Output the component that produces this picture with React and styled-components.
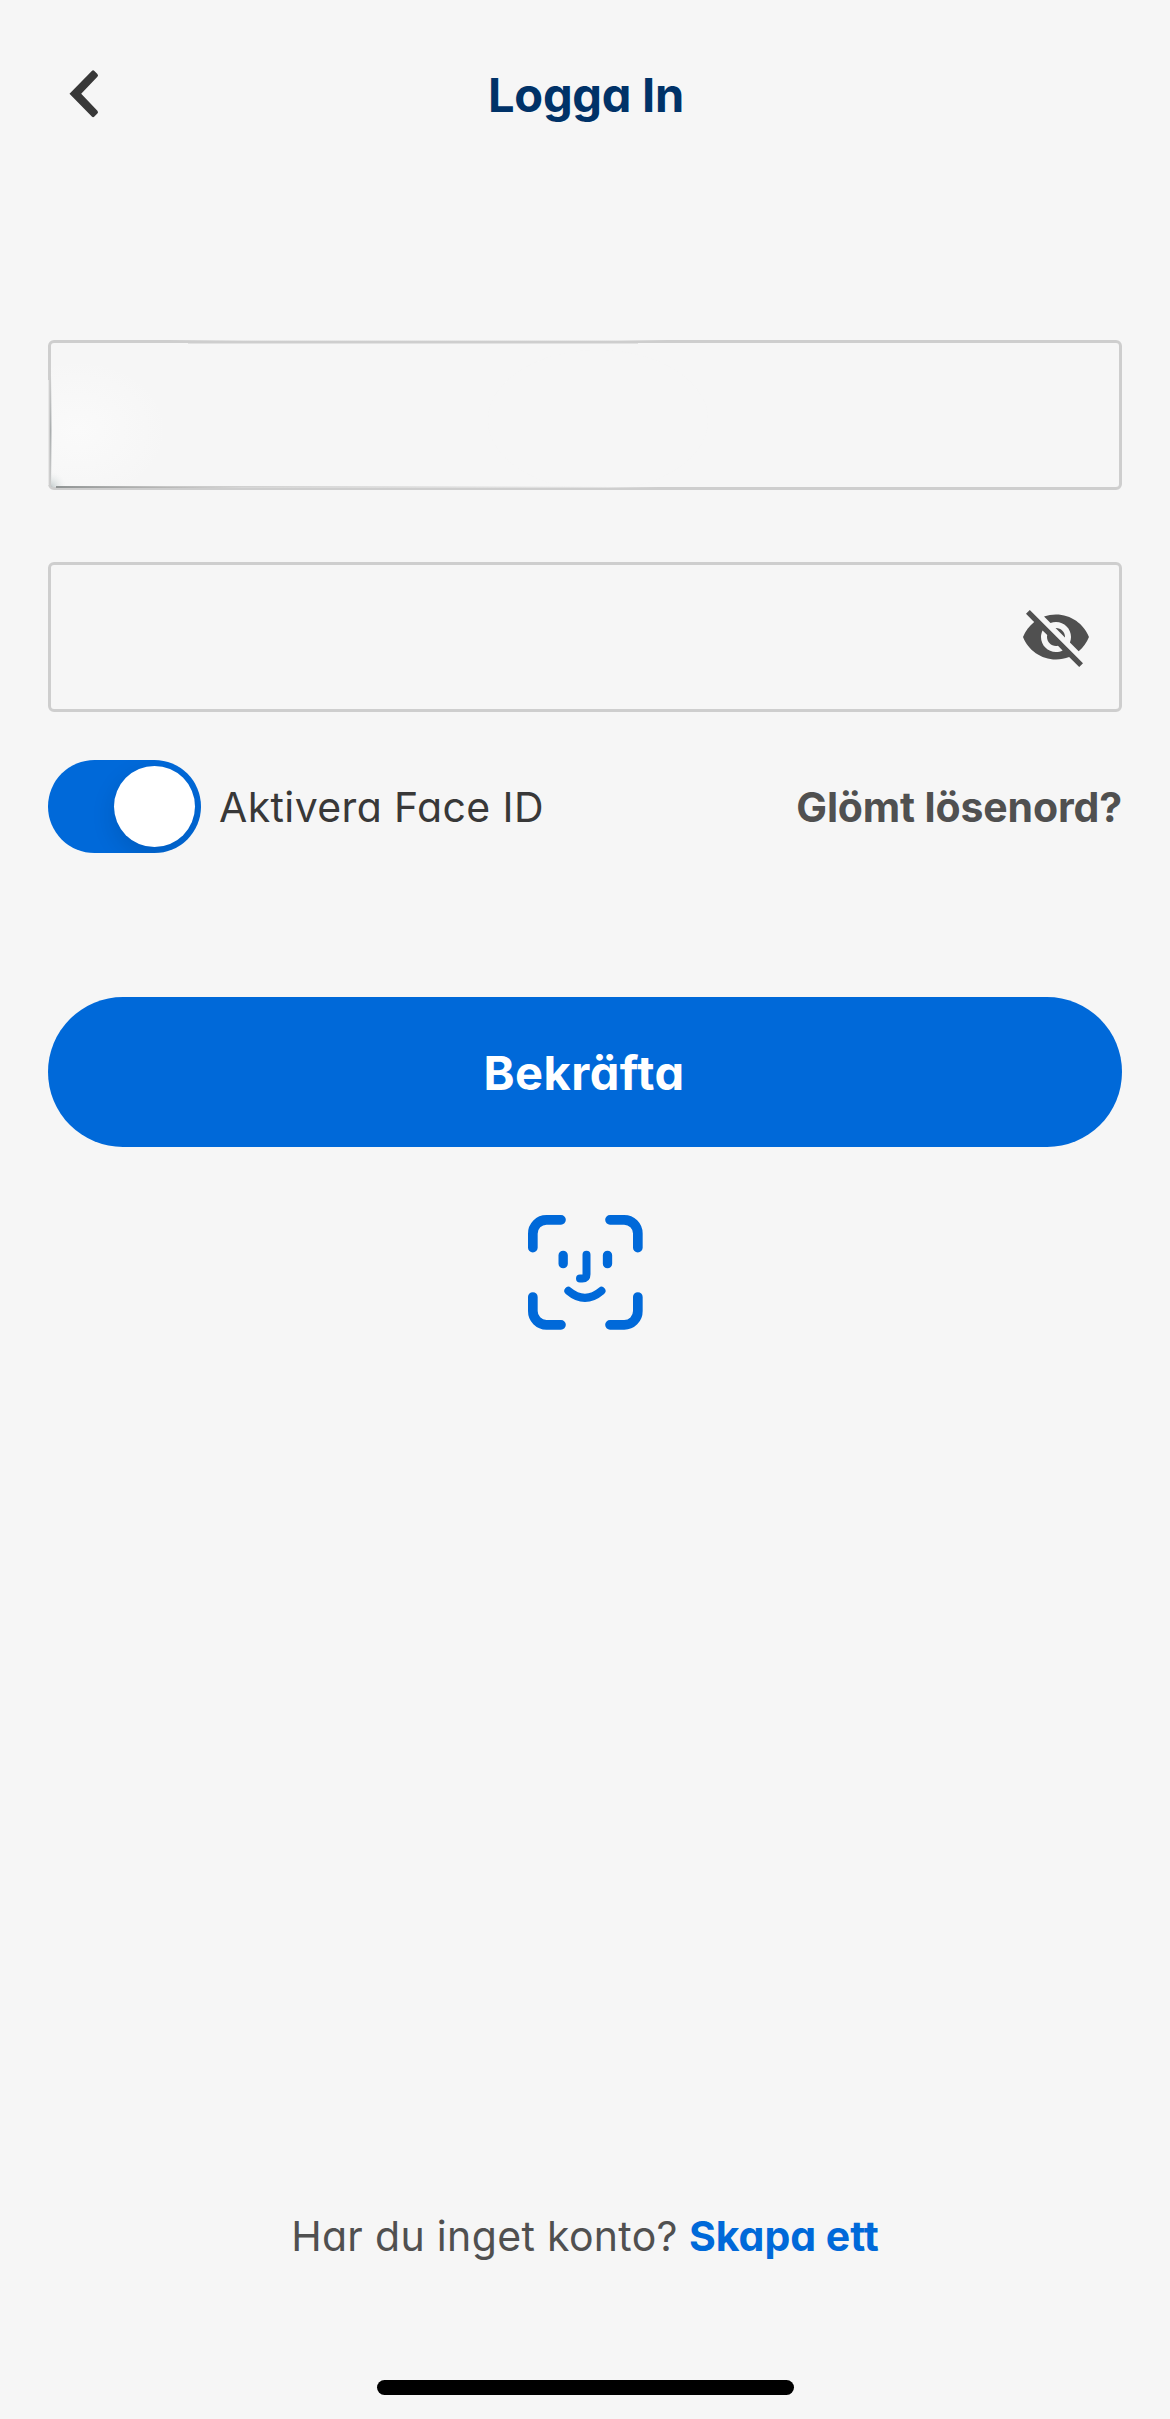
import React, { useState } from "react";
import styled, { createGlobalStyle } from "styled-components";

const blue = "#0069d9";

const GlobalStyle = createGlobalStyle`
  *, *::before, *::after { box-sizing: border-box; }
  body {
    margin: 0;
    background: #f6f6f6;
    font-family: "Inter", "Liberation Sans", sans-serif;
    font-feature-settings: "cv11";
  }
  button, input { font: inherit; font-feature-settings: inherit; }
`;

const Screen = styled.div`
  display: flex;
  flex-direction: column;
  min-height: 2419px;
  padding: 0 48px 24px;
  background: #f6f6f6;
`;

const Header = styled.header`
  display: grid;
  grid-template-columns: 72px 1fr 72px;
  align-items: center;
  height: 188px;
`;

const IconButton = styled.button`
  display: flex;
  width: 72px;
  height: 72px;
  padding: 0;
  border: 0;
  background: none;
  color: ${(p) => p.$color};
  cursor: pointer;
`;

const Title = styled.h1`
  margin: 0;
  padding: 2px 0 0 2px;
  color: #003268;
  font-size: 47px;
  font-weight: 700;
  line-height: 60px;
  letter-spacing: -0.25px;
  text-align: center;
`;

const Form = styled.form`
  display: flex;
  flex-direction: column;
  margin-top: 152px;
`;

const Fields = styled.div`
  display: grid;
  gap: 72px;
`;

const Field = styled.label`
  position: relative;
  display: flex;
  align-items: center;
  height: 150px;
  padding-right: 27px;
  border: 3px solid #cecece;
  border-radius: 6px;
`;

const Input = styled.input`
  flex: 1;
  min-width: 0;
  height: 100%;
  padding: 0 27px;
  border: 0;
  outline: 0;
  background: none;
  color: #383838;
  font-size: 41px;
`;

const SmudgeLayer = styled.svg`
  position: absolute;
  left: -13px;
  top: -13px;
  pointer-events: none;
`;

const Options = styled.div`
  display: flex;
  align-items: center;
  height: 93px;
  margin-top: 48px;
`;

const Switch = styled.button`
  display: flex;
  justify-content: ${(p) => (p.$on ? "flex-end" : "flex-start")};
  width: 153px;
  height: 93px;
  margin-right: 18px;
  padding: 6px;
  border: 0;
  border-radius: 47px;
  background: ${(p) => (p.$on ? blue : "#cecece")};
  overflow: hidden;
  cursor: pointer;
`;

const Thumb = styled.span`
  width: 81px;
  height: 81px;
  border-radius: 50%;
  background: #fff;
  box-shadow: 0 9px 24px rgba(0, 0, 0, 0.12);
`;

const Text = styled.span`
  color: ${(p) => p.$color};
  font-size: 41px;
  font-weight: ${(p) => p.$weight || 400};
  line-height: 50px;
  letter-spacing: ${(p) => p.$spacing || 0}px;
  white-space: pre;
`;

const TextLink = styled(Text).attrs({ as: "a", href: "#" })`
  text-decoration: none;
`;

const Forgot = styled(TextLink)`
  margin-left: auto;
`;

const Submit = styled.button`
  height: 150px;
  margin-top: 144px;
  padding: 2px 2px 0 0;
  border: 0;
  border-radius: 75px;
  background: ${blue};
  color: #fff;
  font-size: 47px;
  font-weight: 700;
  line-height: 60px;
  letter-spacing: 0.5px;
  cursor: pointer;
`;

const FaceButton = styled.button`
  align-self: center;
  display: flex;
  margin-top: 67px;
  padding: 0;
  border: 0;
  background: none;
  color: ${blue};
  cursor: pointer;
`;

const Footer = styled.footer`
  display: flex;
  justify-content: center;
  gap: 11px;
  margin-top: auto;
`;

const HomeIndicator = styled.div`
  align-self: center;
  width: 417px;
  height: 15px;
  margin-top: 119px;
  border-radius: 8px;
  background: #000;
`;

const Chevron = () => (
  <svg width="72" height="72" viewBox="0 0 72 72" fill="currentColor">
    <path d="M21.5 35.7 43.8 12.9Q45.1 11.6 46.4 12.9L49.4 15.9Q50.7 17.3 49.4 18.7L33.2 35.7 49.4 52.7Q50.7 54.1 49.4 55.5L46.4 58.5Q45.1 59.8 43.8 58.5Z" />
  </svg>
);

const EyeOff = () => (
  <svg width="72" height="72" viewBox="0 0 24 24" fill="currentColor">
    <path d="M12 7c2.76 0 5 2.24 5 5 0 .65-.13 1.26-.36 1.83l2.92 2.92c1.51-1.26 2.7-2.89 3.43-4.75-1.73-4.39-6-7.5-11-7.5-1.4 0-2.74.25-3.98.7l2.16 2.16C10.74 7.13 11.35 7 12 7zM2 4.27l2.28 2.28.46.46C3.08 8.3 1.78 10.02 1 12c1.73 4.39 6 7.5 11 7.5 1.55 0 3.03-.3 4.38-.84l.42.42L19.73 22 21 20.73 3.27 3 2 4.27zM7.53 9.8l1.55 1.55c-.05.21-.08.43-.08.65 0 1.66 1.34 3 3 3 .22 0 .44-.03.65-.08l1.55 1.55c-.67.33-1.41.53-2.2.53-2.76 0-5-2.24-5-5 0-.79.2-1.53.53-2.2zm4.31-.78l3.15 3.15.02-.16c0-1.66-1.34-3-3-3l-.17.01z" />
  </svg>
);

const FaceId = () => (
  <svg width="116" height="116" viewBox="0 0 348 348" fill="none" stroke="currentColor" strokeLinecap="round">
    <g strokeWidth="29">
      <path d="M17.500 101V59A41 41 0 0 1 58.500 17.500H102" />
      <path d="M249 17.500H291A41 41 0 0 1 332.500 58.500V101" />
      <path d="M17.500 249V291A41 41 0 0 0 58.500 332.500H102" />
      <path d="M249 332.500H291A41 41 0 0 0 332.500 291V249" />
    </g>
    <path strokeWidth="28" d="M108.500 124V149M241.500 124V149" />
    <path strokeWidth="24" d="M178.500 122V181Q178.500 193.500 166 193.500H159" />
    <path strokeWidth="24" d="M124 230.500Q174 272.500 223.500 230.500" />
  </svg>
);

/* Soft wiped look along the left part of a redacted field */
const Smudge = () => (
  <SmudgeLayer width="700" height="190" viewBox="0 0 700 190">
    <defs>
      <linearGradient id="fadeX">
        <stop offset="0" stopColor="#fff" stopOpacity="0" />
        <stop offset=".15" stopColor="#fff" />
        <stop offset=".9" stopColor="#fff" />
        <stop offset="1" stopColor="#fff" stopOpacity="0" />
      </linearGradient>
      <linearGradient id="fadeY" x2="0" y2="1">
        <stop offset="0" stopColor="#a9adae" stopOpacity="0" />
        <stop offset=".5" stopColor="#a9adae" />
        <stop offset="1" stopColor="#a9adae" stopOpacity="0" />
      </linearGradient>
      <linearGradient id="edge">
        <stop offset="0" stopColor="#8f9393" />
        <stop offset=".2" stopColor="#a9a9a8" stopOpacity=".6" />
        <stop offset="1" stopColor="#b4b4b4" stopOpacity="0" />
      </linearGradient>
      <radialGradient id="corner">
        <stop offset="0" stopColor="#b9c3c4" stopOpacity=".8" />
        <stop offset="1" stopColor="#e8ecec" stopOpacity="0" />
      </radialGradient>
      <radialGradient id="wipe">
        <stop offset="0" stopColor="#fafafa" />
        <stop offset="1" stopColor="#fafafa" stopOpacity="0" />
      </radialGradient>
      <clipPath id="inside">
        <rect x="13" y="13" width="680" height="144" />
      </clipPath>
    </defs>
    <g clipPath="url(#inside)">
      <ellipse cx="40" cy="100" rx="90" ry="70" fill="url(#wipe)" />
      <ellipse cx="560" cy="90" rx="110" ry="70" fill="#f9f6f6" opacity=".25" />
      <circle cx="13" cy="157" r="15" fill="url(#corner)" />
    </g>
    <rect x="130" y="10" width="500" height="1" fill="url(#fadeX)" opacity=".5" />
    <rect x="150" y="13" width="450" height="1" fill="#cecece" opacity=".5" />
    <rect x="10" y="50" width="1" height="105" fill="#fff" opacity=".5" />
    <rect x="12" y="45" width="1.500" height="112" fill="url(#fadeY)" />
    <rect x="18" y="156" width="560" height="2" fill="url(#edge)" />
    <rect x="130" y="157" width="490" height="1" fill="url(#fadeX)" opacity=".4" />
  </SmudgeLayer>
);

export default function App() {
  const [faceId, setFaceId] = useState(true);
  const [visible, setVisible] = useState(false);

  return (
    <>
      <GlobalStyle />
      <Screen>
        <Header>
          <IconButton type="button" $color="#383838" aria-label="Tillbaka">
            <Chevron />
          </IconButton>
          <Title>Logga In</Title>
        </Header>
        <Form onSubmit={(e) => e.preventDefault()}>
          <Fields>
            <Field>
              <Input type="email" aria-label="E-post" />
              <Smudge />
            </Field>
            <Field>
              <Input type={visible ? "text" : "password"} aria-label="Lösenord" />
              <IconButton
                type="button"
                $color="#505050"
                aria-label="Visa lösenord"
                onClick={() => setVisible(!visible)}
              >
                <EyeOff />
              </IconButton>
            </Field>
          </Fields>
          <Options>
            <Switch
              type="button"
              role="switch"
              aria-checked={faceId}
              aria-label="Face ID"
              $on={faceId}
              onClick={() => setFaceId(!faceId)}
            >
              <Thumb />
            </Switch>
            <Text $color="#383838" $spacing={0.38}>Aktivera Face ID</Text>
            <Forgot $color="#505050" $weight={700} $spacing={-0.15}>Glömt lösenord?</Forgot>
          </Options>
          <Submit type="submit">Bekräfta</Submit>
          <FaceButton type="button" aria-label="Logga in med Face ID">
            <FaceId />
          </FaceButton>
        </Form>
        <Footer>
          <Text $color="#505050" $spacing={0.33}>Har du inget konto?</Text>
          <TextLink $color={blue} $weight={700}>Skapa ett</TextLink>
        </Footer>
        <HomeIndicator />
      </Screen>
    </>
  );
}
